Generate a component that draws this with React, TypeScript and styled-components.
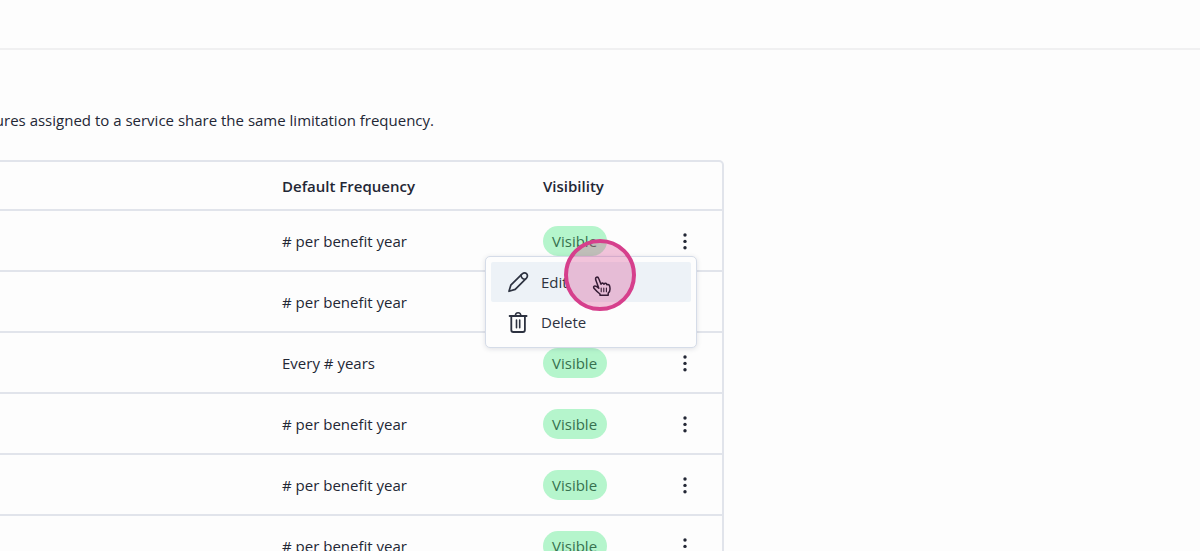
import React from 'react';
import styled, { createGlobalStyle } from 'styled-components';

const GlobalStyle = createGlobalStyle`
  * { box-sizing: border-box; }
  body {
    margin: 0;
    background: #fdfdfd;
    color: #232735;
    font-family: "Open Sans", "Noto Sans", sans-serif;
    font-size: 15px;
    line-height: 20px;
  }
`;

const Page = styled.div`
  height: 100vh;
  overflow: hidden;
`;

const TopBar = styled.header`
  height: 50px;
  border-bottom: 2px solid #f0f0f1;
`;

const Content = styled.main`
  max-width: 724px;
  padding-top: 60px;
`;

const Intro = styled.p`
  display: flex;
  justify-content: flex-end;
  max-width: 434px;
  margin: 0 0 30px;
  overflow: hidden;
  white-space: nowrap;
`;

const TableFrame = styled.div`
  border: 2px solid #e1e4eb;
  border-left: 0;
  border-radius: 0 5px 5px 0;
`;

const Table = styled.table`
  width: 100%;
  border-collapse: separate;
  border-spacing: 0;
  table-layout: fixed;
`;

const HeadCell = styled.th<{ $width?: number }>`
  width: ${({ $width }) => ($width ? `${$width}px` : 'auto')};
  height: 49px;
  padding: 0;
  border-bottom: 2px solid #e1e4eb;
  text-align: left;
  font-weight: 600;
`;

const Cell = styled.td`
  height: 61px;
  padding: 0;
  border-bottom: 2px solid #e1e4eb;
`;

const ActionCell = styled(Cell)`
  position: relative;
  text-align: center;
`;

const Badge = styled.span`
  display: inline-block;
  padding: 5px 10px 5px 9px;
  border-radius: 15px;
  background: #b5f5cc;
  color: #37714f;
`;

const IconButton = styled.button`
  display: inline-flex;
  align-items: center;
  justify-content: center;
  width: 32px;
  height: 32px;
  padding: 0;
  border: 0;
  background: none;
  color: #232735;
  vertical-align: middle;
`;

const Menu = styled.div`
  position: absolute;
  z-index: 1;
  top: 45px;
  right: 25px;
  width: 212px;
  padding: 5px;
  border: 1px solid #d5dce8;
  border-radius: 5px;
  background: #fdfdfd;
  box-shadow: 0 1px 5px rgba(40, 50, 80, 0.14);
`;

const MenuItem = styled.button<{ $active?: boolean }>`
  display: flex;
  align-items: center;
  gap: 12px;
  width: 100%;
  height: 40px;
  padding: 0 16px;
  border: 0;
  border-radius: 2px;
  background: ${({ $active }) => ($active ? '#edf2f7' : 'transparent')};
  color: #2d3240;
  font: inherit;
`;

const Pointer = styled.div`
  position: absolute;
  z-index: 2;
  top: 28px;
  right: 86px;
  width: 72px;
  height: 72px;
  border: 4px solid #d63f8c;
  border-radius: 50%;
  background: rgba(214, 63, 140, 0.3);
  pointer-events: none;

  svg {
    position: absolute;
    top: 33px;
    left: 24px;
  }
`;

const MoreIcon = () => (
  <svg width="4" height="18" viewBox="0 0 4 18" fill="currentColor" aria-hidden="true">
    <circle cx="2" cy="3" r="1.7" />
    <circle cx="2" cy="9.4" r="1.7" />
    <circle cx="2" cy="15.8" r="1.7" />
  </svg>
);

const PencilIcon = () => (
  <svg width="22" height="22" viewBox="0 0 22 22" fill="none" stroke="currentColor" strokeWidth="1.7" strokeLinejoin="round" strokeLinecap="round" aria-hidden="true">
    <path d="M2 20.3 3.8 14.2 15.2 2.8Q17.5.9 19.6 2.7 21.3 4.8 19.5 7.1L8.2 18.4Z" />
    <path d="M14 4Q13.9 5.8 15.2 7.1T18.4 8.2" strokeWidth="1.5" />
  </svg>
);

const TrashIcon = () => (
  <svg width="22" height="22" viewBox="0 0 22 22" fill="none" stroke="currentColor" strokeWidth="1.8" strokeLinejoin="round" strokeLinecap="round" aria-hidden="true">
    <path d="M2.6 5H19.6M4.3 5V19Q4.3 21 6.3 21H15.9Q17.9 21 17.9 19V5" />
    <path d="M8.4 4.8Q8.4 1.8 11.1 1.8T13.8 4.8M9.5 9V16.8M12.7 9V16.8" strokeWidth="1.6" />
  </svg>
);

const HandIcon = () => (
  <svg width="20" height="21" viewBox="0 0 20 21" fill="none" stroke="#351c35" strokeWidth="1.5" strokeLinejoin="round" strokeLinecap="round" aria-hidden="true">
    <path d="M6.8 12.2 3.7 3.8Q3.2 1.7 4.6 1.2 6.2.8 6.8 2.7L9 8.2Q9.4 6.8 10.8 7L12 8.2Q12.8 6.9 14.2 7.5L15 8.8Q17.1 8 17.7 10.3 18.8 15.2 16.2 17.2V19.3H8V18Q4.9 15.8 2 12.3 1.1 10.8 2.4 10.1 3.8 9.5 6.8 12.2Z" />
    <path d="M9.2 12V15.8M11.8 12V15.8M14.4 12V15.8" strokeWidth="1.1" />
  </svg>
);

const frequencies = [
  '# per benefit year',
  '# per benefit year',
  'Every # years',
  '# per benefit year',
  '# per benefit year',
  '# per benefit year',
];

export default function App() {
  return (
    <Page>
      <GlobalStyle />
      <TopBar />
      <Content>
        <Intro>ures assigned to a service share the same limitation frequency.</Intro>
        <TableFrame>
          <Table>
            <thead>
              <tr>
                <HeadCell $width={282} />
                <HeadCell>Default Frequency</HeadCell>
                <HeadCell $width={105}>Visibility</HeadCell>
                <HeadCell $width={74} />
              </tr>
            </thead>
            <tbody>
              {frequencies.map((frequency, index) => (
                <tr key={index}>
                  <Cell />
                  <Cell>{frequency}</Cell>
                  <Cell><Badge>Visible</Badge></Cell>
                  <ActionCell>
                    <IconButton type="button" aria-label="More actions"><MoreIcon /></IconButton>
                    {index === 0 && (
                      <>
                        <Menu role="menu">
                          <MenuItem type="button" role="menuitem" $active><PencilIcon />Edit</MenuItem>
                          <MenuItem type="button" role="menuitem"><TrashIcon />Delete</MenuItem>
                        </Menu>
                        <Pointer><HandIcon /></Pointer>
                      </>
                    )}
                  </ActionCell>
                </tr>
              ))}
            </tbody>
          </Table>
        </TableFrame>
      </Content>
    </Page>
  );
}
